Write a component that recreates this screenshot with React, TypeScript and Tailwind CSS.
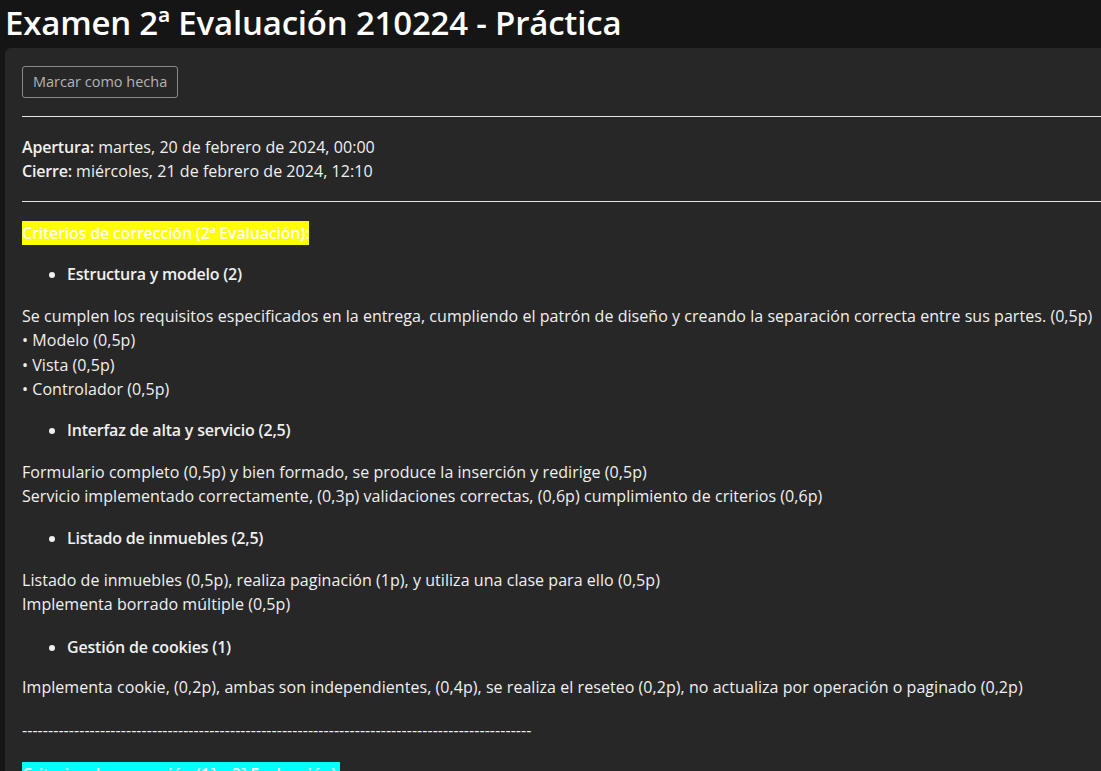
export default function App() {
  const bullets = (label: string, mt: string) => (
    <ul className={`${mt} list-disc pl-[45px]`}>
      <li className="font-semibold tracking-[-0.2px]">{label}</li>
    </ul>
  );

  return (
    <div
      className="min-h-screen overflow-hidden bg-[#151515] text-[#f0f0f0]"
      style={{ fontFamily: '"Open Sans", "Noto Sans", sans-serif' }}
    >
      <h1 className="pl-[5px] pt-[1px] text-[33px] font-semibold leading-[44px] tracking-[-0.2px] text-white">
        Examen 2ª Evaluación 210224 - Práctica
      </h1>

      <main className="ml-[5px] mt-[3px] min-h-[723px] rounded-tl-[6px] bg-[#272727] pl-[17px] pt-[18px] text-[16px] leading-[24.3px] tracking-[0.05px]">
        <button className="h-[32px] rounded-[3px] border border-[#8a8a8a] px-[10px] text-[14.5px] tracking-normal text-[#b4b4b4]">
          Marcar como hecha
        </button>

        <hr className="mt-[18px] border-t-[1.5px] border-[#e6e6e6]" />

        <div className="pt-[18px] pb-[17px]">
          <p>
            <b className="font-semibold tracking-[-0.2px]">Apertura:</b> martes, 20 de febrero de 2024, 00:00
          </p>
          <p>
            <b className="font-semibold tracking-[-0.2px]">Cierre:</b> miércoles, 21 de febrero de 2024, 12:10
          </p>
        </div>

        <hr className="border-t-[1.5px] border-[#e6e6e6]" />

        <p className="mt-[19px]">
          <span className="bg-[#ffff00] py-[1px] font-semibold tracking-[-0.2px] text-white">
            Criterios de corrección (2ª Evaluación):
          </span>
        </p>

        {bullets('Estructura y modelo (2)', 'mt-[17px]')}

        <p className="mt-[18px] whitespace-nowrap">
          Se cumplen los requisitos especificados en la entrega, cumpliendo el patrón de diseño y creando la
          separación correcta entre sus partes. (0,5p)
          <br />• Modelo (0,5p)
          <br />• Vista (0,5p)
          <br />• Controlador (0,5p)
        </p>

        {bullets('Interfaz de alta y servicio (2,5)', 'mt-[17px]')}

        <p className="mt-[17px]">
          Formulario completo (0,5p) y bien formado, se produce la inserción y redirige (0,5p)
          <br />
          Servicio implementado correctamente, (0,3p) validaciones correctas, (0,6p) cumplimiento de criterios (0,6p)
        </p>

        {bullets('Listado de inmuebles (2,5)', 'mt-[18px]')}

        <p className="mt-[17px]">
          Listado de inmuebles (0,5p), realiza paginación (1p), y utiliza una clase para ello (0,5p)
          <br />
          Implementa borrado múltiple (0,5p)
        </p>

        {bullets('Gestión de cookies (1)', 'mt-[19px]')}

        <p className="mt-[16px]">
          Implementa cookie, (0,2p), ambas son independientes, (0,4p), se realiza el reseteo (0,2p), no actualiza
          por operación o paginado (0,2p)
        </p>

        <p className="mt-[18px]">{'-'.repeat(98)}</p>

        <p className="mt-[20px]">
          <span className="bg-[#00ffff] py-[1px] font-semibold tracking-[-0.2px] text-white">
            Criterios de corrección (1ª y 2ª Evaluación):
          </span>
        </p>
      </main>
    </div>
  );
}
